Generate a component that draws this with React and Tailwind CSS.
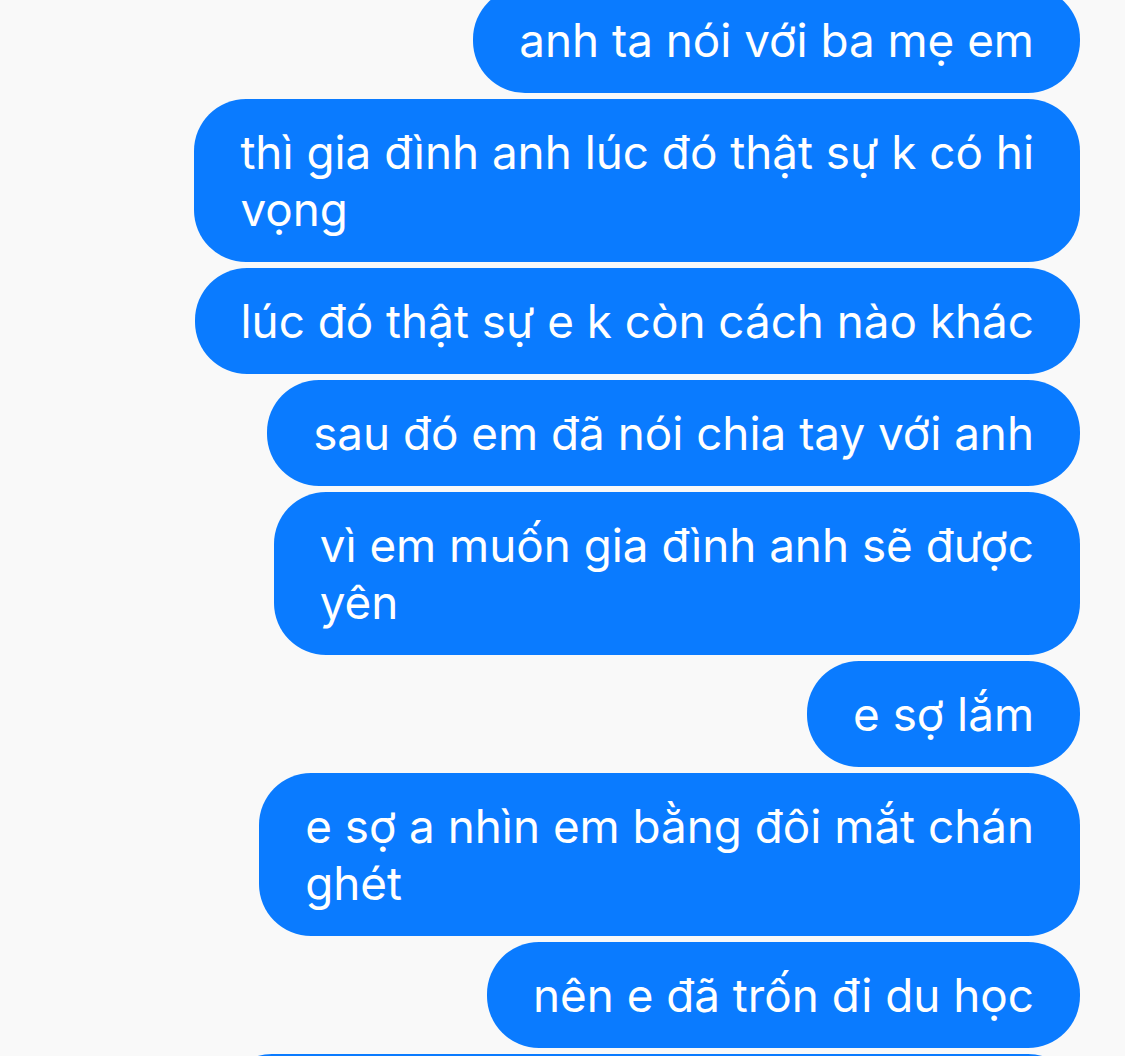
const messages = [
  "anh ta nói với ba mẹ em",
  "thì gia đình anh lúc đó thật sự k có hi\nvọng",
  "lúc đó thật sự e k còn cách nào khác",
  "sau đó em đã nói chia tay với anh",
  "vì em muốn gia đình anh sẽ được\nyên",
  "e sợ lắm",
  "e sợ a nhìn em bằng đôi mắt chán\nghét",
  "nên e đã trốn đi du học",
];

export default function App() {
  return (
    <div className="w-[1125px] h-[1056px] overflow-hidden bg-[#f9f9f9] font-['Inter','Noto_Sans',sans-serif]">
      <div className="-mt-[13px] flex flex-col items-end gap-[6px] pr-[45px]">
        {messages.map((m, i) => (
          <div
            key={i}
            className="rounded-[52px] bg-[#0a7bff] px-[46px] py-[24.5px] text-[45.8px] leading-[57px] text-white whitespace-pre-line"
          >
            {m}
          </div>
        ))}
        {/* next message, only its top edge shows */}
        <div className="h-[106px] w-[860px] rounded-[52px] bg-[#0a7bff]" />
      </div>
    </div>
  );
}
